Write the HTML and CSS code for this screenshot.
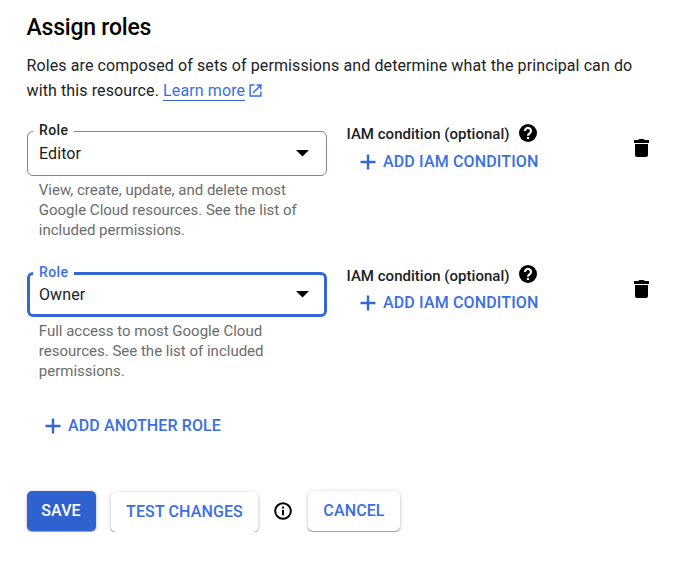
FILE: index.html
```html
<!DOCTYPE html>
<html lang="en">
<head>
<meta charset="utf-8">
<title>Assign roles</title>
<link rel="stylesheet" href="styles.css">
</head>
<body>
<main class="page">
  <h1 class="title">Assign roles</h1>
  <p class="intro">Roles are composed of sets of permissions and determine what the principal can do<br>with this resource. <a class="link" href="#">Learn more</a><svg class="external" viewBox="0 0 14 14"><path d="M6 1.2H1.2v11.6h11.6V8M8.2 1.2h4.6v4.6M12.5 1.5 4.3 9.7"/></svg></p>

  <section class="role-row">
    <div class="role">
      <div class="select">
        <span class="select-label">Role</span>
        <span class="select-value">Editor</span>
        <svg class="arrow" viewBox="0 0 13 7"><path d="M0 0h13L6.5 6.5z"/></svg>
      </div>
      <p class="hint">View, create, update, and delete most<br>Google Cloud resources. See the list of<br>included permissions.</p>
    </div>
    <div class="condition">
      <div class="condition-head"><span class="condition-label">IAM condition (optional)</span><svg class="help" viewBox="0 0 18 18"><circle cx="9" cy="9" r="9"/><path d="M6 6.9a3 3 0 1 1 4.9 2.3C9.7 10.1 9 10.5 9 11.7M9 13v2"/></svg></div>
      <button class="text-button"><svg class="plus" viewBox="0 0 16 16"><path d="M8 .5v15M.5 8h15"/></svg><span class="add-label">ADD IAM CONDITION</span></button>
    </div>
    <button class="delete" aria-label="Delete role"><svg class="trash" viewBox="0 0 15 18"><path d="M1 5h13v11a2 2 0 0 1-2 2H3a2 2 0 0 1-2-2zM0 1h4.2l1-1h4.6l1 1H15v3H0z"/></svg></button>
  </section>

  <section class="role-row second">
    <div class="role">
      <div class="select focused">
        <span class="select-label">Role</span>
        <span class="select-value">Owner</span>
        <svg class="arrow" viewBox="0 0 13 7"><path d="M0 0h13L6.5 6.5z"/></svg>
      </div>
      <p class="hint">Full access to most Google Cloud<br>resources. See the list of included<br>permissions.</p>
    </div>
    <div class="condition">
      <div class="condition-head"><span class="condition-label">IAM condition (optional)</span><svg class="help" viewBox="0 0 18 18"><circle cx="9" cy="9" r="9"/><path d="M6 6.9a3 3 0 1 1 4.9 2.3C9.7 10.1 9 10.5 9 11.7M9 13v2"/></svg></div>
      <button class="text-button"><svg class="plus" viewBox="0 0 16 16"><path d="M8 .5v15M.5 8h15"/></svg><span class="add-label">ADD IAM CONDITION</span></button>
    </div>
    <button class="delete" aria-label="Delete role"><svg class="trash" viewBox="0 0 15 18"><path d="M1 5h13v11a2 2 0 0 1-2 2H3a2 2 0 0 1-2-2zM0 1h4.2l1-1h4.6l1 1H15v3H0z"/></svg></button>
  </section>

  <button class="text-button add-role"><svg class="plus" viewBox="0 0 16 16"><path d="M8 .5v15M.5 8h15"/></svg><span class="add-label">ADD ANOTHER ROLE</span></button>

  <div class="actions">
    <button class="button save">SAVE</button>
    <button class="button test">TEST CHANGES</button>
    <svg class="info" viewBox="0 0 18 18"><circle cx="9" cy="9" r="7.8"/><path d="M9 8v5.2M9 4.6v2"/></svg>
    <button class="button cancel">CANCEL</button>
  </div>
</main>
</body>
</html>
```
FILE: styles.css
```css
* { box-sizing: border-box; }
body {
  margin: 0;
  background: #fff;
  color: #202124;
  font-family: Roboto, "Liberation Sans", sans-serif;
}
button { border: 0; background: none; padding: 0; font: inherit; white-space: nowrap; }
svg { display: block; flex: none; }
.page { padding: 14px 24px 0 27px; }
.title { margin: 0 0 0 -0.5px; font-size: 23px; line-height: 28px; font-weight: 500; color: #000; letter-spacing: -0.22px; }
.intro { margin: 11px 0 0 -0.5px; height: 50px; font-size: 16px; line-height: 25px; white-space: nowrap; letter-spacing: 0.11px; }
.link { color: #3b6fe0; text-decoration: none; border-bottom: 1px solid #3367d6; }
.external { display: inline-block; width: 13px; height: 13px; margin-left: 4px; vertical-align: -1px; fill: none; stroke: #3b6fe0; stroke-width: 1.6; }

.role-row { display: flex; height: 141px; }
.intro + .role-row { margin-top: 28px; }
.role { width: 300px; }
.select {
  position: relative;
  display: flex;
  align-items: center;
  justify-content: space-between;
  height: 45px;
  padding: 0 17px 0 11px;
  border: 1px solid #80868b;
  border-radius: 6px;
}
.select.focused { border: 3px solid #3367d6; padding: 0 15px 0 9px; }
.select-label {
  position: absolute;
  left: 5px;
  top: -11px;
  padding: 0 6px;
  background: #fff;
  font-size: 14px;
  line-height: 18px;
  font-weight: 500;
  letter-spacing: 0.4px;
}
.focused .select-label { left: 3px; top: -12px; color: #3b6fe0; }
.select-value { font-size: 16px; line-height: 24px; letter-spacing: 0.1px; }
.arrow { width: 13px; height: 7px; fill: #000; }
.hint { margin: 4px 0 0 11.8px; font-size: 15px; line-height: 20px; color: #6b6b6b; white-space: nowrap; }
.condition { margin-left: 19.5px; width: 260.5px; margin-top: -7px; }
.condition-head { display: flex; align-items: center; gap: 9.5px; height: 20px; }
.condition-label { font-size: 15px; font-weight: 500; white-space: nowrap; letter-spacing: 0.02px; }
.second .condition-label { padding-top: 2px; }
.help { width: 18px; height: 18px; margin-top: -2px; fill: #000; }
.help path { fill: none; stroke: #fff; stroke-width: 2.2; }
.text-button { display: flex; align-items: center; gap: 7px; color: #3b6fe0; font-size: 16px; line-height: 20px; font-weight: 500; letter-spacing: 0.15px; }
.condition .text-button { margin: 8px 0 0 13.5px; }
.plus { width: 16px; height: 16px; fill: none; stroke: #3367d6; stroke-width: 2.4; }
.delete { width: 15px; height: 18px; margin: 8px 0 0 27px; }
.trash { width: 15px; height: 18px; fill: #000; }
.add-role { margin: 3px 0 0 18px; letter-spacing: 0.12px; }

.actions { display: flex; align-items: flex-start; margin-top: 55px; }
.button { height: 40px; border-radius: 5px; font-size: 16px; line-height: 40px; font-weight: 500; color: #3b6fe0; background: #fff; box-shadow: 0 1px 1px rgba(0,0,0,.3), 0 1px 4px rgba(0,0,0,.22); letter-spacing: 0.12px; }
.save { width: 69px; color: #fff; background: #3062cf; padding: 0 1px 1px 0; line-height: 38px; }
.test { width: 147px; margin: 1px 0 0 15px; }
.info { width: 18px; height: 18px; margin: 11px 0 0 16px; fill: none; stroke: #000; stroke-width: 2; }
.cancel { width: 92px; margin-left: 16px; }
```
